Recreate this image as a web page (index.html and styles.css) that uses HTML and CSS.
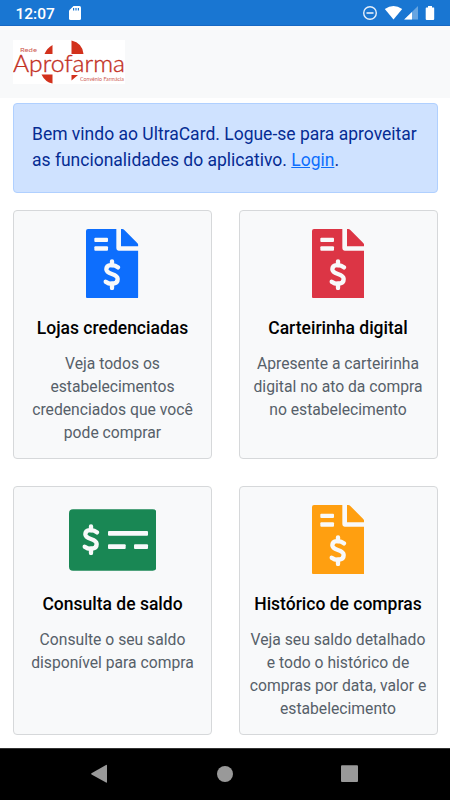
FILE: index.html
```html
<!DOCTYPE html>
<html lang="pt-BR">
<head>
<meta charset="utf-8">
<title>UltraCard</title>
<link rel="stylesheet" href="styles.css">
</head>
<body>
<svg class="defs" width="0" height="0">
  <symbol id="dollar" viewBox="0 0 52 94">
    <path d="M44 25C34 16 9 14 9 31C9 49 43 41 43 60C43 77 20 78 7 68" fill="none" stroke="#f8f9fa" stroke-width="13" stroke-linecap="round"/>
    <path d="M26 7V19M26 73V87" stroke="#f8f9fa" stroke-width="13" stroke-linecap="round"/>
  </symbol>
  <symbol id="invoice" viewBox="0 0 157 209">
    <path d="M6 0H91V58Q91 65 98 65H157V202Q157 209 150 209H7Q0 209 0 202V6Q0 0 6 0ZM105 0H109Q112 0 115 3L153 41Q157 45 157 48V52H105Z" fill="currentColor"/>
    <rect x="25" y="26" width="41" height="13" rx="3" fill="#f8f9fa"/>
    <rect x="25" y="52" width="41" height="13" rx="3" fill="#f8f9fa"/>
    <use href="#dollar" x="52" y="90" width="52" height="94"/>
  </symbol>
</svg>
<header class="status">
  <span class="time">12:07</span>
  <svg class="sd" width="12" height="14" viewBox="0 0 12 14"><path d="M4.500 0H10.500Q12 0 12 1.500V12.500Q12 14 10.500 14H1.500Q0 14 0 12.500V4.500Z" fill="#fff"/><path d="M4.600 2V4.500M7 2V4.500M9.400 2V4.500" stroke="#1976d2" stroke-width="1.200"/></svg>
  <svg class="signals" width="74" height="16" viewBox="0 0 74 16">
    <circle cx="8" cy="8" r="6.300" fill="none" stroke="#e5effa" stroke-width="1.400"/><path d="M4.500 8H11.500" stroke="#e5effa" stroke-width="1.600"/>
    <path d="M22.800 4Q31.500-2 40.200 4L31.500 14.500Z" fill="#fff"/>
    <path d="M56 1V14.500H42.200Z" fill="#67a5e1"/><path d="M50 6.900V14.500H42.200Z" fill="#fff"/>
    <path d="M66 1H70V2.500H72Q72.200 2.500 72.200 3.500V14Q72.200 15 71.200 15H64.800Q63.700 15 63.700 14V3.500Q63.700 2.500 64.500 2.500H66Z" fill="#fff"/>
  </svg>
</header>
<div class="brand">
  <svg width="112" height="44" viewBox="0 0 112 44">
    <rect width="112" height="44" fill="#fff"/>
    <g fill="#d2311c"><path d="M31.500 14Q34 8 39.500 5V14ZM58.500 0.500Q69.500 3 70.500 14H58.500ZM28.500 34.500H39.500V43.500Q32 42 28.500 34.500ZM58.500 35H65L58.500 40.500Z"/></g>
    <text x="7" y="12" class="logo-small" textLength="17" lengthAdjust="spacingAndGlyphs">Rede</text>
    <text x="0" y="31.500" class="logo-name" textLength="112" lengthAdjust="spacingAndGlyphs">Aprofarma</text>
    <text x="67" y="41.300" class="logo-tag" textLength="44" lengthAdjust="spacingAndGlyphs">Convênio Farmácia</text>
  </svg>
</div>
<main>
  <div class="alert">Bem vindo ao UltraCard. Logue-se para aproveitar<br>as funcionalidades do aplicativo. <a href="#">Login</a>.</div>
  <div class="grid">
    <section class="card">
      <svg class="icon blue" viewBox="0 0 157 209"><use href="#invoice"/></svg>
      <h2>Lojas credenciadas</h2>
      <p>Veja todos os<br>estabelecimentos<br>credenciados que você<br>pode comprar</p>
    </section>
    <section class="card">
      <svg class="icon red" viewBox="0 0 157 209"><use href="#invoice"/></svg>
      <h2>Carteirinha digital</h2>
      <p>Apresente a carteirinha<br>digital no ato da compra<br>no estabelecimento</p>
    </section>
    <section class="card">
      <svg class="icon green" viewBox="0 -13 263 209"><rect width="263" height="184" rx="12" fill="currentColor"/><use href="#dollar" x="40" y="44" width="52" height="94"/><g fill="#f8f9fa"><rect x="117" y="65" width="120" height="14" rx="3"/><rect x="117" y="105" width="53" height="14" rx="3"/><rect x="195" y="105" width="42" height="14" rx="3"/></g></svg>
      <h2>Consulta de saldo</h2>
      <p>Consulte o seu saldo<br>disponível para compra</p>
    </section>
    <section class="card">
      <svg class="icon orange" viewBox="0 0 157 209"><use href="#invoice"/></svg>
      <h2>Histórico de compras</h2>
      <p>Veja seu saldo detalhado<br>e todo o histórico de<br>compras por data, valor e<br>estabelecimento</p>
    </section>
  </div>
</main>
<nav class="navbar">
  <svg width="450" height="52" viewBox="0 0 450 52" fill="#999"><path d="M91.500 25.200L106 17Q107 16.500 107 17.500V34Q107 35 106 34.500L91.500 26.400Q90.700 25.800 91.500 25.200Z"/><circle cx="225" cy="26" r="8"/><rect x="341" y="17.300" width="17" height="16.700" rx="1"/></svg>
</nav>
</body>
</html>
```
FILE: styles.css
```css
* { box-sizing: border-box; }
body {
  margin: 0;
  width: 450px;
  height: 800px;
  overflow: hidden;
  display: flex;
  flex-direction: column;
  background: #fff;
  font-family: Roboto, "Liberation Sans", sans-serif;
}
.defs { position: absolute; }
.status {
  height: 26px;
  flex: none;
  display: flex;
  align-items: center;
  padding: 0 14px 0 15.500px;
  background: #1976d2;
  border-bottom: 1px solid #1668c4;
}
.time { color: #fff; font-size: 15.500px; font-weight: 500; line-height: 26px; width: 53px; padding-top: 2px; }
.signals { margin-left: auto; }
.brand { height: 72px; flex: none; padding: 14px 13px 0; background: #f8f9fa; }
.brand svg { display: block; }
.logo-small, .logo-name, .logo-tag { font-family: Lato, sans-serif; fill: #c3301f; }
.logo-small { font-size: 6.500px; font-weight: 400; opacity: 0.8; }
.logo-name { font-size: 22.500px; font-weight: 300; stroke: #c3301f; stroke-width: 0.350px; }
.logo-tag { font-size: 5px; font-weight: 400; opacity: 0.8; }
main { flex: 1; padding: 5px 12.5px 0 13px; min-height: 0; }
.alert {
  height: 89.500px;
  padding: 16.500px 18px;
  color: #052c93;
  background: #cfe2ff;
  border: 1px solid #b0d0ff;
  border-radius: 4px;
  font-size: 17.500px;
  line-height: 26.500px;
  letter-spacing: 0;
  white-space: nowrap;
}
.alert a { color: #0d6efd; }
.grid {
  display: grid;
  grid-template-columns: 1fr 1fr;
  grid-auto-rows: 249.500px;
  gap: 26.500px;
  margin-top: 17.300px;
}
.card {
  display: flex;
  flex-direction: column;
  align-items: center;
  padding-top: 18px;
  background: #f8f9fa;
  border: 1px solid #d6d8da;
  border-radius: 4px;
  text-align: center;
  white-space: nowrap;
}
.icon { height: 69.700px; flex: none; }
.blue { color: #0d6efd; }
.red { color: #dc3545; }
.green { color: #198754; }
.orange { color: #ff9f10; }
h2 { margin: 19px 0 0; font-size: 17.500px; line-height: 22px; font-weight: 500; color: #000; }
p { margin: 13.400px 0 0; font-size: 15.700px; line-height: 22.900px; color: #566069; }
.navbar { height: 52px; flex: none; background: #000; border-top: 1px solid #333; }
.navbar svg { display: block; margin-top: -1px; }
```
